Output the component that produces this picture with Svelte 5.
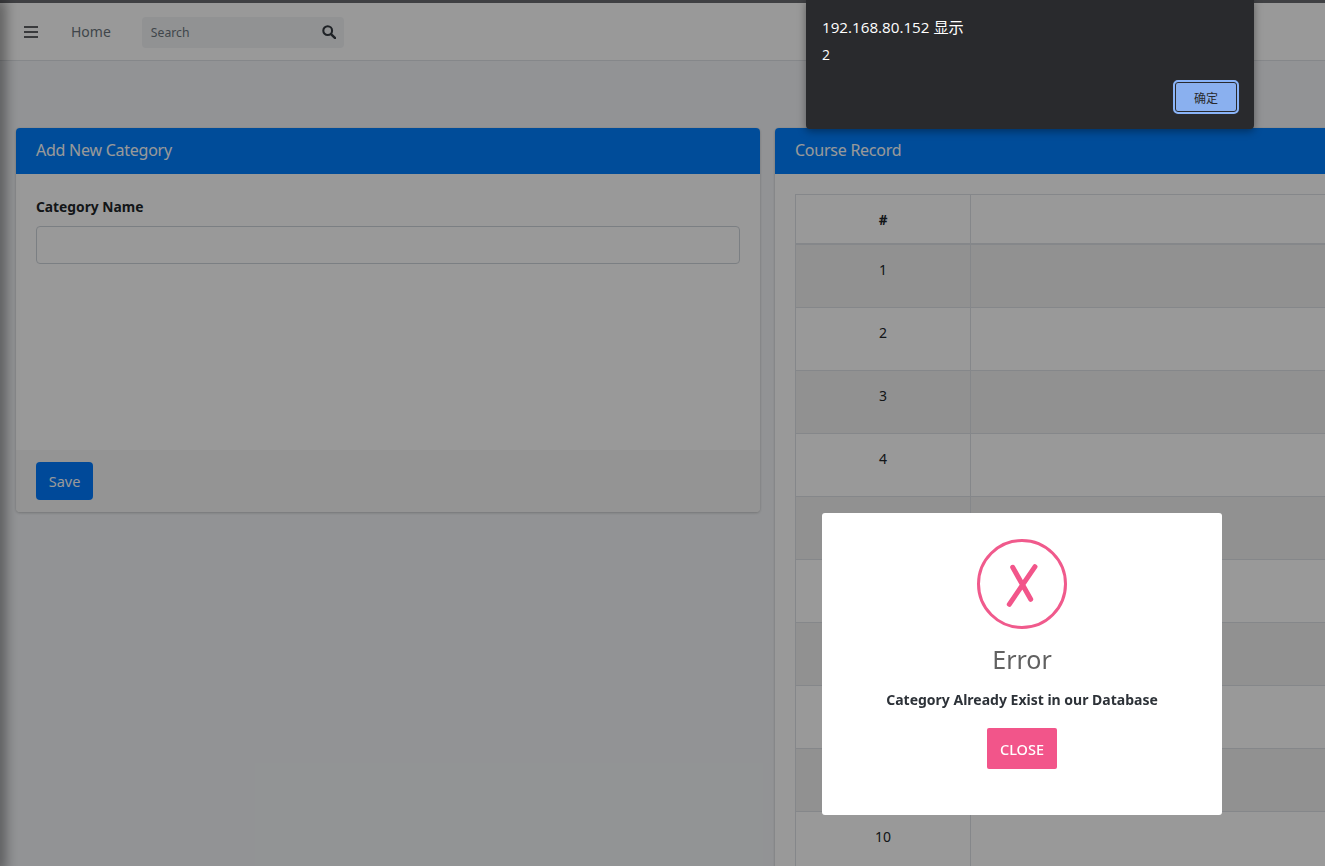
<script>
  const rows = [1, 2, 3, 4, 5, 6, 7, 8, 9, 10];
</script>

<div class="page">
  <div class="topline"></div>
  <div class="sidebar-edge"></div>

  <nav class="navbar">
    <svg class="menu" viewBox="0 0 14 12" width="14" height="12" aria-hidden="true">
      <path d="M0 1h14M0 6h14M0 11h14" stroke="#5f6164" stroke-width="2" fill="none" />
    </svg>
    <a class="home" href="#home">Home</a>
    <div class="search">
      <span>Search</span>
      <svg viewBox="0 0 16 16" width="14" height="14" aria-hidden="true">
        <circle cx="6.5" cy="6.5" r="5" fill="none" stroke="#343a40" stroke-width="2.4" />
        <path d="M10.3 10.3L15 15" stroke="#343a40" stroke-width="2.8" stroke-linecap="round" />
      </svg>
    </div>
  </nav>

  <main class="content">
    <section class="card form-card">
      <header>Add New Category</header>
      <div class="card-body">
        <label for="cat">Category Name</label>
        <input id="cat" type="text" />
      </div>
      <div class="card-footer">
        <button class="save">Save</button>
      </div>
    </section>

    <section class="card">
      <header>Course Record</header>
      <div class="card-body table-body">
        <table>
          <thead>
            <tr><th class="num">#</th><th></th></tr>
          </thead>
          <tbody>
            {#each rows as n}
              <tr><td class="num">{n}</td><td></td></tr>
            {/each}
          </tbody>
        </table>
      </div>
    </section>
  </main>

  <div class="overlay"></div>

  <div class="alert">
    <div class="alert-title">192.168.80.152 显示</div>
    <div class="alert-msg">2</div>
    <div class="alert-actions"><button>确定</button></div>
  </div>

  <div class="modal">
    <svg class="err" viewBox="0 0 90 90" width="90" height="90" aria-hidden="true">
      <circle cx="45" cy="45" r="43.5" fill="none" stroke="#f05a8c" stroke-width="3" />
      <path d="M35.7 28.3L53.7 60.3M58 27.7L32.3 65.3" stroke="#f2558a" stroke-width="5" stroke-linecap="round" fill="none" />
    </svg>
    <h2>Error</h2>
    <p>Category Already Exist in our Database</p>
    <button class="close">CLOSE</button>
  </div>
</div>

<style>
  :global(body) {
    margin: 0;
    background: #f4f6f9;
  }
  .page {
    position: relative;
    width: 1325px;
    height: 866px;
    overflow: hidden;
    background: #f4f6f9;
    font-family: "Noto Sans", "Noto Sans CJK SC", sans-serif;
    color: #212529;
  }
  .topline {
    height: 3px;
    background: #6a6b70;
  }
  .sidebar-edge {
    position: absolute;
    left: -4px;
    top: 3px;
    width: 4px;
    height: 100%;
    box-shadow: 0 0 14px 4px rgba(0, 0, 0, 0.5);
    z-index: 2;
  }
  .navbar {
    display: flex;
    align-items: center;
    height: 58px;
    box-sizing: border-box;
    background: #fff;
    border-bottom: 1px solid #dee2e6;
    padding: 0 0 0 24px;
  }
  .home {
    margin-left: 33px;
    color: #6c757d;
    font-size: 14px;
    text-decoration: none;
  }
  .search {
    margin-left: 31px;
    margin-top: 1px;
    width: 202px;
    height: 31px;
    box-sizing: border-box;
    padding: 0 8px 0 9px;
    display: flex;
    align-items: center;
    justify-content: space-between;
    background: #f2f4f6;
    border-radius: 4px;
    color: #6c757d;
    font-size: 12.2px;
  }
  .content {
    display: grid;
    grid-template-columns: 744px 744px;
    gap: 15px;
    padding: 67px 0 0 16px;
    align-items: start;
  }
  .card {
    background: #fff;
    border-radius: 4px;
    box-shadow: 0 0 1px rgba(0, 0, 0, 0.125), 0 1px 3px rgba(0, 0, 0, 0.2);
    overflow: hidden;
  }
  .card header {
    height: 46px;
    box-sizing: border-box;
    padding: 0 20px 3px;
    display: flex;
    align-items: center;
    background: #007fff;
    color: #fff;
    font-size: 16px;
    letter-spacing: -0.25px;
  }
  .card-body {
    padding: 20px;
    height: 276px;
    box-sizing: border-box;
  }
  .table-body {
    height: auto;
  }
  label {
    display: block;
    font-size: 13.8px;
    font-weight: 700;
    line-height: 26px;
    margin-bottom: 6px;
  }
  input {
    display: block;
    width: 100%;
    height: 38px;
    box-sizing: border-box;
    border: 1px solid #ced4da;
    border-radius: 4px;
    background: #fff;
  }
  .card-footer {
    padding: 12px 20px;
    background: #f7f7f7;
  }
  .save {
    display: block;
    width: 57px;
    height: 38px;
    border: 0;
    border-radius: 4px;
    background: #007bff;
    color: #fff;
    font: 14.5px "Noto Sans", sans-serif;
  }
  table {
    width: 100%;
    border-collapse: collapse;
    table-layout: fixed;
    font-size: 14px;
  }
  th,
  td {
    border: 1px solid #dee2e6;
    text-align: center;
    padding: 13px 12px 11px;
    line-height: 24px;
    box-sizing: border-box;
  }
  th {
    height: 49px;
    border-bottom-width: 2px;
    font-weight: 700;
    font-size: 13.5px;
  }
  td {
    height: 63px;
    vertical-align: top;
  }
  .num {
    width: 175px;
  }
  tbody tr:nth-child(odd) {
    background: rgba(0, 0, 0, 0.05);
  }
  .overlay {
    position: absolute;
    inset: 0;
    background: rgba(0, 0, 0, 0.4);
    z-index: 3;
  }
  .alert {
    position: absolute;
    left: 806px;
    top: 0;
    width: 448px;
    height: 129px;
    box-sizing: border-box;
    padding: 17px 15px 0 16px;
    background: #292a2d;
    border-radius: 0 0 4px 4px;
    box-shadow: 0 2px 8px rgba(0, 0, 0, 0.4);
    color: #fff;
    font-size: 14px;
    z-index: 5;
    font-family: "Open Sans", "Noto Sans CJK SC", sans-serif;
  }
  .alert-title {
    line-height: 20px;
    font-size: 15.2px;
  }
  .alert-msg {
    margin-top: 8px;
    line-height: 20px;
  }
  .alert-actions {
    display: flex;
    justify-content: flex-end;
    margin-top: 15px;
  }
  .alert-actions button {
    width: 66px;
    height: 34px;
    box-sizing: border-box;
    padding: 0;
    background: #8ab0ef;
    border: 2px solid #8ab4f8;
    box-shadow: inset 0 0 0 1px #292a2d;
    border-radius: 5px;
    color: #292a2d;
    font: 12px "Noto Sans CJK SC", sans-serif;
  }
  .modal {
    position: absolute;
    left: 822px;
    top: 513px;
    width: 400px;
    height: 302px;
    box-sizing: border-box;
    padding-top: 26px;
    display: flex;
    flex-direction: column;
    align-items: center;
    background: #fff;
    border-radius: 3px;
    z-index: 4;
    filter: blur(0.35px);
  }
  .err {
    display: block;
  }
  .modal h2 {
    margin: 13px 0 0;
    font-size: 25px;
    font-weight: 400;
    line-height: 34px;
    color: #616161;
  }
  .modal p {
    margin: 12px 0 0;
    font-size: 14px;
    font-weight: 700;
    line-height: 24px;
    color: #2d3238;
  }
  .close {
    margin-top: 16px;
    width: 70px;
    height: 41px;
    border: 0;
    border-radius: 2px;
    background: #f2558a;
    color: #fff;
    font: 500 14.5px "Noto Sans", sans-serif;
  }
</style>
